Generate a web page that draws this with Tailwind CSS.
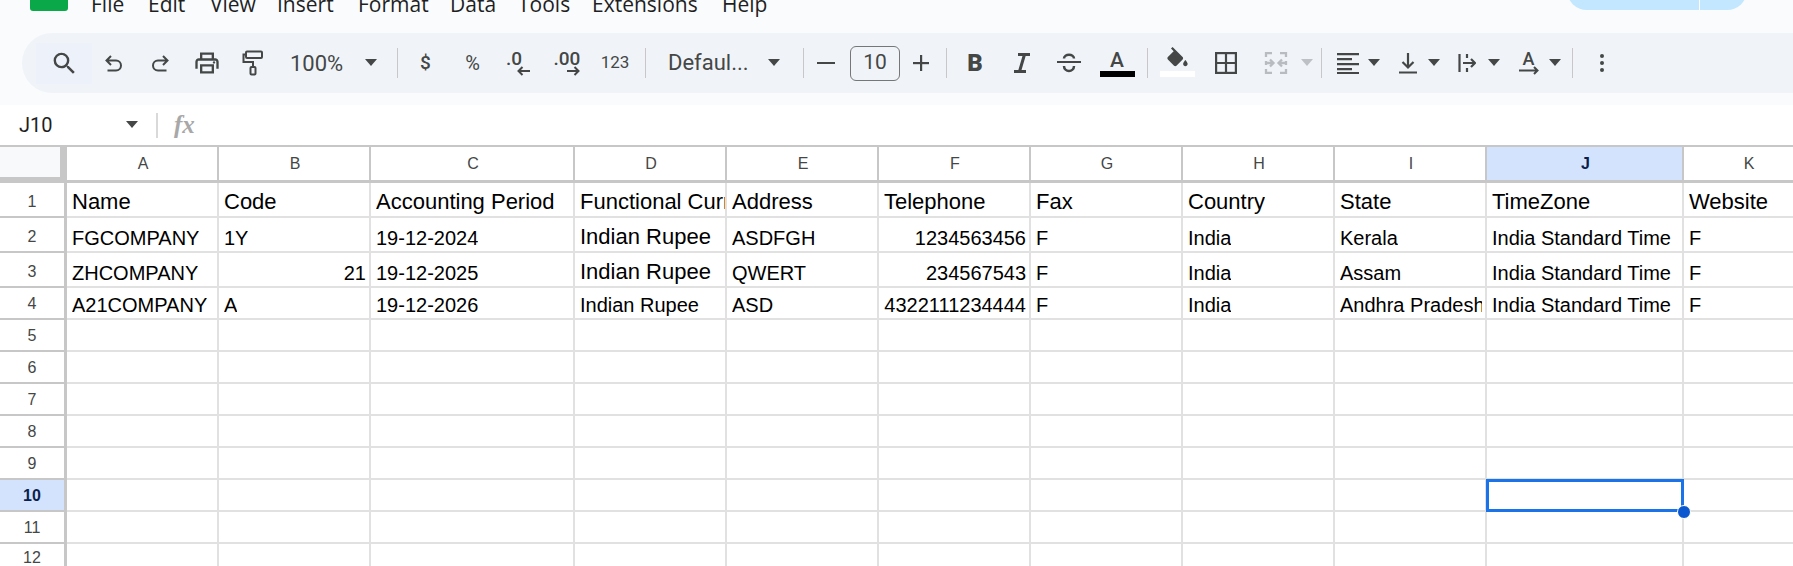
<!DOCTYPE html>
<html lang="en">
  <head>
    <meta charset="UTF-8" />
    <title>Company sheet</title>
    <script src="https://cdn.jsdelivr.net/npm/@tailwindcss/browser@4"></script>
  </head>
  <body class="bg-white h-[566px] overflow-hidden font-['Liberation_Sans',sans-serif]">
    <div class="bg-[#f9fbfd] h-[105px]">
      <!-- menu bar, cut by the top of the window -->
      <div class="flex items-start h-[33px] overflow-hidden text-[21px] leading-[20px] text-[#1f1f1f] font-['Open_Sans',sans-serif]">
        <div class="ml-[30px] w-[38px] h-[11px] bg-[#0ba84a] rounded-b-[3px]"></div>
        <div class="flex ml-[23px] -mt-[6px]">
          <span class="w-[57px]">File</span>
          <span class="w-[62px]">Edit</span>
          <span class="w-[67px]">View</span>
          <span class="w-[81px]">Insert</span>
          <span class="w-[92px]">Format</span>
          <span class="w-[68px]">Data</span>
          <span class="w-[74px]">Tools</span>
          <span class="w-[130px]">Extensions</span>
          <span>Help</span>
        </div>
        <div class="ml-auto mr-[46px] w-[180px] h-[10px] overflow-hidden">
          <div class="h-[40px] -mt-[30px] bg-[#c2e7ff] rounded-[20px] flex">
            <div class="ml-[132px] w-px h-full bg-white"></div>
          </div>
        </div>
      </div>

      <!-- toolbar -->
      <div class="ml-[22px] h-[60px] bg-[#f0f4f9] rounded-l-[30px] pl-[14px] flex items-center text-[#444746] font-['Roboto',sans-serif]">
        <div class="w-[56px] h-[41px] bg-[#edf2fa] flex items-center justify-center">
          <svg width="29" height="29" viewBox="0 0 24 24" fill="#444746"><path d="M15.5 14h-.79l-.28-.27A6.471 6.471 0 0 0 16 9.5 6.5 6.5 0 1 0 9.5 16c1.61 0 3.09-.59 4.23-1.57l.27.28v.79l5 4.99L20.49 19l-4.99-5zm-6 0C7.01 14 5 11.99 5 9.5S7.01 5 9.5 5 14 7.01 14 9.5 11.99 14 9.5 14z"/></svg>
        </div>
        <div class="w-[43px] flex justify-center">
          <svg width="19" height="19" viewBox="0 0 19 19" fill="none" stroke="#444746" stroke-width="2"><path d="M7 2 2.500 6.500 7 11M2.500 6.500H12a5 5 0 0 1 0 10H3.500"/></svg>
        </div>
        <div class="w-[50px] flex justify-center">
          <svg width="19" height="19" viewBox="0 0 19 19" fill="none" stroke="#444746" stroke-width="2"><path d="M12 2l4.500 4.500L12 11M16.500 6.500H7a5 5 0 0 0 0 10h8.500"/></svg>
        </div>
        <div class="w-[44px] flex justify-center">
          <svg width="28" height="28" viewBox="0 0 24 24" fill="#444746"><path d="M19 8h-1V3H6v5H5c-1.660 0-3 1.340-3 3v6h4v4h12v-4h4v-6c0-1.660-1.340-3-3-3zM8 5h8v3H8V5zm8 14H8v-4h8v4zm2-2v-4H6v4H4v-6c0-.55.45-1 1-1h14c.55 0 1 .45 1 1v6h-2z"/><circle cx="18" cy="11.500" r="1"/></svg>
        </div>
        <div class="w-[48px] flex justify-center">
          <svg width="22" height="26" viewBox="0 0 22 26" fill="none" stroke="#444746" stroke-width="2"><rect x="4" y="1.500" width="16" height="6.500" rx="1"/><path d="M4 4.500H1.500V12H11V17"/><rect x="8.500" y="17" width="5" height="7.500" rx="1"/></svg>
        </div>
        <div class="w-[113px] pl-[13px] pr-[12px] flex items-center justify-between text-[22px]">
          <span>100%</span>
          <svg width="14" height="8" viewBox="0 0 14 8" fill="#444746"><path d="M1 0h12L7 7z"/></svg>
        </div>
        <div class="w-[14px] flex justify-center"><div class="w-px h-[30px] bg-[#c7c7c7]"></div></div>
        <div class="w-[43px] text-center text-[19px] font-medium">$</div>
        <div class="w-[51px] text-center text-[20px]">%</div>
        <div class="w-[40px] flex justify-center">
          <div class="relative w-[24px] h-[26px]">
            <span class="absolute left-0 -top-[2px] text-[19px] font-medium leading-[22px]">.0</span>
            <svg class="absolute right-0 bottom-0" width="13" height="10" viewBox="0 0 13 10" fill="none" stroke="#444746" stroke-width="2"><path d="M5.500 1 1.500 5l4 4M1.500 5H13"/></svg>
          </div>
        </div>
        <div class="w-[58px] flex justify-center">
          <div class="relative w-[25px] h-[26px]">
            <span class="absolute -left-[1px] -top-[2px] text-[19px] font-medium leading-[22px]">.00</span>
            <svg class="absolute right-0 bottom-0" width="13" height="10" viewBox="0 0 13 10" fill="none" stroke="#444746" stroke-width="2"><path d="M7.500 1l4 4-4 4M11.500 5H0"/></svg>
          </div>
        </div>
        <div class="w-[38px] text-center text-[17px]">123</div>
        <div class="w-[23px] flex justify-center"><div class="w-px h-[30px] bg-[#c7c7c7]"></div></div>
        <div class="w-[132px] pl-[11px] pr-[8px] flex items-center justify-between text-[22px]">
          <span class="-mt-[1px]">Defaul...</span>
          <svg width="14" height="8" viewBox="0 0 14 8" fill="#444746"><path d="M1 0h12L7 7z"/></svg>
        </div>
        <div class="w-[28px] flex justify-center"><div class="w-px h-[30px] bg-[#c7c7c7]"></div></div>
        <div class="w-[18px] h-[2.500px] bg-[#444746]"></div>
        <div class="ml-[15px] w-[50px] h-[35px] border border-[#747775] rounded-[6px] flex items-center justify-center text-[21px]">10</div>
        <div class="w-[42px] flex justify-center">
          <svg width="18" height="18" viewBox="0 0 18 18" fill="#444746"><path d="M8 1h2.200v16H8z"/><path d="M1 8h16v2.200H1z"/></svg>
        </div>
        <div class="w-[8px] flex justify-center"><div class="w-px h-[30px] bg-[#c7c7c7]"></div></div>
        <div class="w-[50px] text-center text-[24px] font-black leading-none">B</div>
        <div class="w-[44px] flex justify-center">
          <svg width="18" height="20" viewBox="0 0 18 20" fill="none" stroke="#444746" stroke-width="3"><path d="M5 1.500h12M1 18.500h12M11.500 1.500l-5 17"/></svg>
        </div>
        <div class="w-[50px] flex justify-center">
          <svg width="24" height="22" viewBox="0 0 24 22" fill="none" stroke="#444746" stroke-width="2"><path d="M0 10h24" /><path stroke-width="2.500" d="M7 6.500c0-5 10-5 10 0M7 14c0 6.500 10 6.500 10 0"/></svg>
        </div>
        <div class="w-[46px] flex justify-center">
          <div class="w-[35px] relative h-[28px] flex justify-center">
            <span class="text-[21px] font-medium leading-[22px]">A</span>
            <div class="absolute left-0 bottom-0 w-full h-[6px] bg-black"></div>
          </div>
        </div>
        <div class="w-[14px] flex justify-center"><div class="w-px h-[30px] bg-[#c7c7c7]"></div></div>
        <div class="w-[46px] flex justify-center">
          <div class="w-[35px] relative h-[28px] flex justify-center">
            <svg class="-mt-[2px]" width="27" height="27" viewBox="0 0 24 24" fill="#444746"><path d="M16.560 8.940 7.620 0 6.210 1.410l2.380 2.380-5.150 5.150c-.59.59-.59 1.540 0 2.120l5.500 5.500c.29.29.68.44 1.060.44s.77-.15 1.060-.44l5.500-5.500c.59-.58.59-1.530 0-2.120z"/><path d="M19 11.500s-2 2.170-2 3.500c0 1.100.9 2 2 2s2-.9 2-2c0-1.330-2-3.500-2-3.500z"/></svg>
            <div class="absolute left-0 bottom-0 w-full h-[6px] bg-white"></div>
          </div>
        </div>
        <div class="w-[52px] flex justify-center">
          <svg width="22" height="22" viewBox="0 0 22 22" fill="none" stroke="#444746" stroke-width="2.200"><rect x="1.100" y="1.100" width="19.800" height="19.800"/><path d="M11 1v20M1 11h20"/></svg>
        </div>
        <div class="w-[48px] flex justify-center">
          <svg width="24" height="22" viewBox="0 0 24 22" fill="none" stroke="#b8bcc0" stroke-width="2.300"><path d="M8 1H2v4M2 9v4M2 17v4h6M16 1h6v4M22 9v4M22 17v4h-6M1 11h8M6 7.500 9.500 11 6 14.500M23 11h-8M18 7.500 14.500 11l3.500 3.500"/></svg>
        </div>
        <svg class="w-[14px]" width="14" height="8" viewBox="0 0 14 8" fill="#bdc1c6"><path d="M1 0h12L7 7z"/></svg>
        <div class="w-[14px] flex justify-center"><div class="w-px h-[30px] bg-[#c7c7c7]"></div></div>
        <div class="w-[39px] flex justify-center">
          <svg width="22" height="22" viewBox="0 0 22 22" fill="#444746"><path d="M0 1h22v2.200H0zM0 6h15v2.200H0zM0 11h22v2.200H0zM0 16h15v2.200H0zM0 20h22v2H0z"/></svg>
        </div>
        <svg class="w-[14px]" width="14" height="8" viewBox="0 0 14 8" fill="#444746"><path d="M1 0h12L7 7z"/></svg>
        <div class="w-[46px] pl-[8px] flex justify-center">
          <svg width="18" height="22" viewBox="0 0 18 22" fill="none" stroke="#444746" stroke-width="2.200"><path d="M9 1v14M3.500 10 9 15.500 14.500 10M0 20.500h18"/></svg>
        </div>
        <svg class="w-[14px]" width="14" height="8" viewBox="0 0 14 8" fill="#444746"><path d="M1 0h12L7 7z"/></svg>
        <div class="w-[46px] pl-[6px] flex justify-center">
          <svg width="18" height="22" viewBox="0 0 18 22" fill="none" stroke="#444746" stroke-width="2.200"><path d="M1.500 2v18M9 2v4M9 16v4M5 11h12M13 7l4 4-4 4"/></svg>
        </div>
        <svg class="w-[14px]" width="14" height="8" viewBox="0 0 14 8" fill="#444746"><path d="M1 0h12L7 7z"/></svg>
        <div class="w-[47px] pl-[8px] flex justify-center">
          <div class="relative w-[20px] h-[24px] flex justify-center">
            <span class="text-[18px] font-medium leading-[18px] -mt-[1px]">A</span>
            <svg class="absolute left-0 bottom-0" width="20" height="9" viewBox="0 0 20 9" fill="none" stroke="#444746" stroke-width="2"><path d="M0 4.500h18M15 1l3.500 3.500L15 8"/></svg>
          </div>
        </div>
        <svg class="w-[14px]" width="14" height="8" viewBox="0 0 14 8" fill="#444746"><path d="M1 0h12L7 7z"/></svg>
        <div class="w-[20px] flex justify-center"><div class="w-px h-[30px] bg-[#c7c7c7]"></div></div>
        <div class="w-[40px] flex flex-col items-center gap-[2.500px]">
          <div class="w-[4.500px] h-[4.500px] rounded-full bg-[#444746]"></div>
          <div class="w-[4.500px] h-[4.500px] rounded-full bg-[#444746]"></div>
          <div class="w-[4.500px] h-[4.500px] rounded-full bg-[#444746]"></div>
        </div>
      </div>
    </div>

    <!-- formula bar -->
    <div class="h-[42px] bg-white flex items-center border-b-2 border-[#c7c7c7]">
      <div class="w-[150px] pl-[19px] pr-[11px] flex items-center justify-between text-[20px] text-[#1f1f1f] font-['Roboto',sans-serif]">
        <span>J10</span>
        <svg width="14" height="8" viewBox="0 0 14 8" fill="#444746"><path d="M1 0h12L7 7z"/></svg>
      </div>
      <div class="ml-[6px] w-[2px] h-[25px] bg-[#d9d9d9]"></div>
      <span class="ml-[16px] text-[25px] font-bold italic text-[#a8a8a8] font-['Liberation_Serif',serif]">fx</span>
    </div>

    <div id="grid" class="grid grid-cols-[67px_152px_152px_204px_152px_152px_152px_152px_152px_152px_197px_130px] grid-rows-[36px_35px_35px_35px_32px_32px_32px_32px_32px_32px_32px_32px]"></div>

    <script>
      const letters = ["A", "B", "C", "D", "E", "F", "G", "H", "I", "J", "K"];
      const rows = [
        ["Name", "Code", "Accounting Period", "Functional Currency", "Address", "Telephone", "Fax", "Country", "State", "TimeZone", "Website"],
        ["FGCOMPANY", "1Y", "19-12-2024", "Indian Rupee", "ASDFGH", "1234563456", "F", "India", "Kerala", "India Standard Time", "F"],
        ["ZHCOMPANY", "21", "19-12-2025", "Indian Rupee", "QWERT", "234567543", "F", "India", "Assam", "India Standard Time", "F"],
        ["A21COMPANY", "A", "19-12-2026", "Indian Rupee", "ASD", "4322111234444", "F", "India", "Andhra Pradesh", "India Standard Time", "F"]
      ];
      const numeric = ["21", "1234563456", "234567543", "4322111234444"];
      const grid = document.getElementById("grid");
      let html = '<div class="bg-white"><div class="w-full h-full bg-[#f8f9fa] border-r-[7px] border-b-[6px] border-[#c7c7c7]"></div></div>';

      letters.forEach((l) => {
        const on = l === "J";
        html += `<div class="flex items-center justify-center pl-[2px] text-[16px] border-r-2 border-b-[3px] border-[#c7c7c7] ${
          on ? "bg-[#d3e3fd] font-bold text-[#0b1f4d]" : "text-[#444746]"
        }">${l}</div>`;
      });

      for (let r = 1; r <= 12; r++) {
        const on = r === 10;
        html += `<div class="flex items-center justify-center text-[16px] border-r-[3px] border-b-2 border-[#c7c7c7] ${
          on ? "bg-[#d3e3fd] font-bold text-[#0b1f4d]" : "text-[#444746]"
        } ${r < 4 ? "pt-[5px]" : "pt-[2px]"}">${r}</div>`;
        letters.forEach((l, c) => {
          const text = rows[r - 1] ? rows[r - 1][c] : "";
          // the header row and the two upper Indian Rupee cells are 11pt, the rest 10pt
          const big = r === 1 || (c === 3 && r < 4);
          const right = numeric.includes(text);
          let extra = "";
          if (on && l === "J") {
            extra = '<div class="absolute -left-[1px] -top-[1px] w-[198px] h-[33px] border-[3px] border-[#1a73e8] z-10"></div><div class="absolute -right-[9px] -bottom-[9px] w-[14px] h-[14px] rounded-full bg-[#0b57d0] border border-white z-20"></div>';
          }
          html += `<div class="relative pl-[5px] flex items-end whitespace-nowrap text-black border-r-2 border-b-2 border-[#e1e1e1] ${
            right ? "justify-end" : ""
          } ${c === 3 ? "pr-0" : "pr-[3px]"} ${big ? "text-[22px] leading-[26px] pb-[1px]" : "text-[20px] leading-[24px] pb-[1px]"}"><span class="block overflow-hidden">${text}</span>${extra}</div>`;
        });
      }
      grid.innerHTML = html;
    </script>
  </body>
</html>
